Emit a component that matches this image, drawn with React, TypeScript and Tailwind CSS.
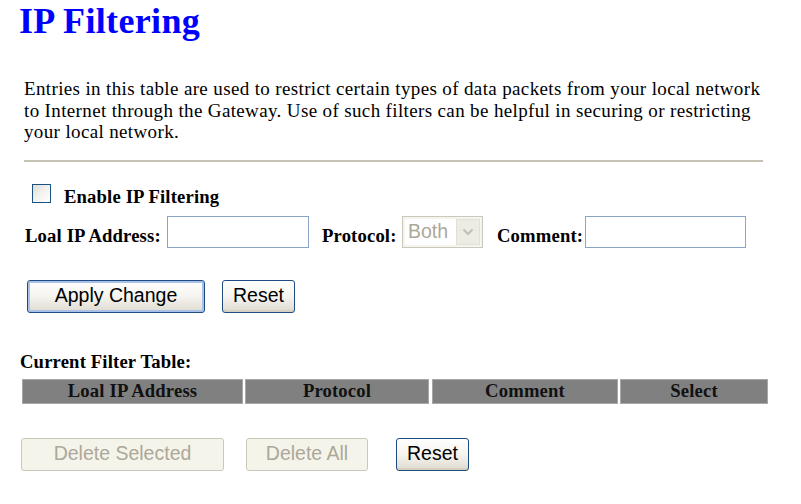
import React from "react";

function XpButton({
  children,
  width,
  disabled = false,
  focused = false,
}: {
  children: React.ReactNode;
  width: string;
  disabled?: boolean;
  focused?: boolean;
}) {
  if (disabled) {
    return (
      <div
        className={`${width} h-[33px] shrink-0 flex items-center justify-center rounded-[3px] border border-[#cac8bb] bg-[#f5f4ea] text-[19.5px] text-[#aca899] font-['Liberation_Sans',Arial,sans-serif]`}
      >
        {children}
      </div>
    );
  }
  return (
    <div
      className={`${width} h-[33px] shrink-0 flex items-center justify-center rounded-[3px] border border-[#1f4c80] bg-gradient-to-b from-[#ffffff] via-[#f5f4ef] to-[#dedbd0] text-[19.5px] text-black font-['Liberation_Sans',Arial,sans-serif] ${
        focused ? "shadow-[inset_0_0_0_2px_#a9c1e8]" : "shadow-[inset_0_-2px_0_#d6d0c0]"
      }`}
    >
      {children}
    </div>
  );
}

function TextBox({ width }: { width: string }) {
  return <div className={`${width} h-[32px] shrink-0 border border-[#8aa5c8] bg-white`} />;
}

export default function App() {
  const labelCls = "shrink-0 font-bold text-[18.67px] tracking-[0.15px] leading-[21px] pb-[2px] text-black";
  return (
    <div className="w-[801px] h-[504px] bg-white overflow-hidden font-['Liberation_Serif','Times_New_Roman',serif] text-black">
      <h1 className="pl-[19px] pt-[1px] text-[36px] tracking-[0.35px] leading-[40px] font-bold text-[#0000ff]">
        IP Filtering
      </h1>

      <p className="mt-[37px] ml-[24px] text-[19px] tracking-[0.36px] leading-[21.5px] whitespace-nowrap">
        Entries in this table are used to restrict certain types of data packets from your local network
        <br />
        to Internet through the Gateway. Use of such filters can be helpful in securing or restricting
        <br />
        your local network.
      </p>

      <div className="mt-[17px] ml-[24px] w-[739px] h-[2px] bg-[#c6c3b5]" />

      <div className="mt-[22px] flex items-start h-[21px]">
        <div className="ml-[32px] w-[19px] h-[19px] shrink-0 border border-[#1c5180] bg-gradient-to-br from-[#dcdcd6] via-[#f2f2ef] to-[#ffffff]" />
        <span className="ml-[13px] pt-[2px] font-bold text-[18.67px] tracking-[0.15px] leading-[21px]">Enable IP Filtering</span>
      </div>

      <div className="mt-[11px] ml-[25px] flex items-end h-[32px]">
        <span className={`${labelCls} w-[142px]`}>Loal IP Address:</span>
        <TextBox width="w-[142px]" />
        <span className={`${labelCls} ml-[13px] w-[80px]`}>Protocol:</span>
        <div className="w-[81px] h-[32px] shrink-0 flex items-stretch border border-[#cac8bb] bg-[#f5f4ef] p-[2px]">
          <div className="flex-1 flex items-center pl-[3px] bg-white text-[19.5px] text-[#aca899] font-['Liberation_Sans',Arial,sans-serif]">
            Both
          </div>
          <div className="w-[24px] flex items-center justify-center bg-[#ecebe4] border border-[#e2e0d6]">
            <svg width="12" height="8" viewBox="0 0 12 8">
              <path d="M1.5 1.5 L6 6 L10.5 1.5" fill="none" stroke="#c3c1b6" strokeWidth="2.2" />
            </svg>
          </div>
        </div>
        <span className={`${labelCls} ml-[14px] w-[88px]`}>Comment:</span>
        <TextBox width="w-[161px]" />
      </div>

      <div className="mt-[32px] flex">
        <div className="ml-[27px]">
          <XpButton width="w-[178px]" focused>
            Apply Change
          </XpButton>
        </div>
        <div className="ml-[17px]">
          <XpButton width="w-[73px]">Reset</XpButton>
        </div>
      </div>

      <div className="mt-[38px] ml-[20px] font-bold text-[18.67px] tracking-[0.15px] leading-[21px]">Current Filter Table:</div>

      <div className="mt-[7px] ml-[22px] flex h-[25px] font-bold text-[18.67px] tracking-[0.15px] text-[#111]">
        <div className="w-[221px] flex items-center justify-center bg-[#808080] border border-[#a8a8a8]">Loal IP Address</div>
        <div className="ml-[2px] w-[184px] flex items-center justify-center bg-[#808080] border border-[#a8a8a8]">Protocol</div>
        <div className="ml-[3px] w-[186px] flex items-center justify-center bg-[#808080] border border-[#a8a8a8]">Comment</div>
        <div className="ml-[2px] w-[148px] flex items-center justify-center bg-[#808080] border border-[#a8a8a8]">Select</div>
      </div>

      <div className="mt-[34px] flex">
        <div className="ml-[21px]">
          <XpButton width="w-[203px]" disabled>
            Delete Selected
          </XpButton>
        </div>
        <div className="ml-[22px]">
          <XpButton width="w-[122px]" disabled>
            Delete All
          </XpButton>
        </div>
        <div className="ml-[28px]">
          <XpButton width="w-[73px]">Reset</XpButton>
        </div>
      </div>
    </div>
  );
}
